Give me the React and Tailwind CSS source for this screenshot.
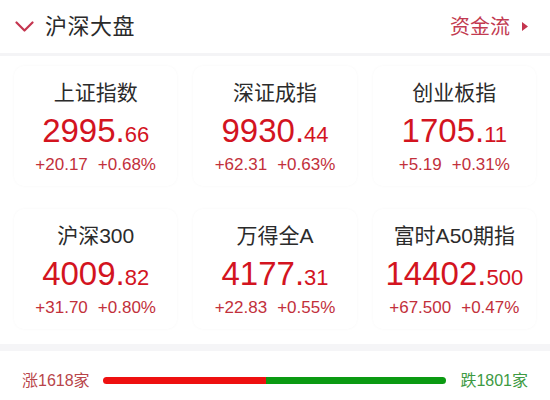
import React from 'react';

const indices = [
    { name: '上证指数', int: '2995', dec: '66', chg: '+20.17', pct: '+0.68%' },
    { name: '深证成指', int: '9930', dec: '44', chg: '+62.31', pct: '+0.63%' },
    { name: '创业板指', int: '1705', dec: '11', chg: '+5.19', pct: '+0.31%' },
    { name: '沪深300', int: '4009', dec: '82', chg: '+31.70', pct: '+0.80%' },
    { name: '万得全A', int: '4177', dec: '31', chg: '+22.83', pct: '+0.55%' },
    { name: '富时A50期指', int: '14402', dec: '500', chg: '+67.500', pct: '+0.47%' },
];

const font = { fontFamily: '"Liberation Sans", "Noto Sans CJK SC", sans-serif' };

export default function App() {
    const up = 1618;
    const down = 1801;
    const upPct = (up / (up + down)) * 100;

    return (
        <div className="w-[550px] h-[400px] bg-white overflow-hidden" style={font}>
            {/* Header */}
            <div className="h-[53px] flex items-center justify-between pl-[15px] pr-[22px]">
                <div className="flex items-center gap-[11px]">
                    <svg width="19" height="12" viewBox="0 0 19 12" className="mt-[1px]">
                        <path d="M1.5 1.5 L9.5 9.5 L17.5 1.5" fill="none" stroke="#c4354f" strokeWidth="2.2" strokeLinecap="round" strokeLinejoin="round" />
                    </svg>
                    <span className="text-[22px] text-[#2a2a2a] tracking-[0.5px]">沪深大盘</span>
                </div>
                <div className="flex items-center gap-[12px]">
                    <span className="text-[20px] text-[#c23a50]">资金流</span>
                    <svg width="6" height="9" viewBox="0 0 6 9">
                        <path d="M0 0 L6 4.5 L0 9 Z" fill="#c4354f" />
                    </svg>
                </div>
            </div>
            <div className="h-[3px] bg-[#f4f4f6]" />

            {/* Cards */}
            <div className="grid grid-cols-3 gap-x-[16px] gap-y-[23px] px-[14px] pt-[10px] pb-[15px]">
                {indices.map((it) => (
                    <div key={it.name} className="h-[120px] rounded-[10px] bg-white shadow-[0_0_3px_rgba(0,0,0,0.035)] flex flex-col items-center pt-[12px]">
                        <div className="text-[21px] leading-[30px] text-[#2b2b2b]">{it.name}</div>
                        <div className="mt-[6px] leading-[34px] text-[#d3141f]">
                            <span className="text-[33px]">{it.int}</span>
                            <span className="text-[33px]">.</span>
                            <span className="text-[22px]">{it.dec}</span>
                        </div>
                        <div className="mt-[1px] text-[17px] leading-[20px] text-[#c2303b] flex gap-[10px]">
                            <span>{it.chg}</span>
                            <span>{it.pct}</span>
                        </div>
                    </div>
                ))}
            </div>

            <div className="h-[7px] bg-[#f5f5f7]" />

            {/* Breadth bar */}
            <div className="h-[49px] pt-[10px] flex items-center pl-[22px] pr-[22px]">
                <span className="text-[16px] text-[#b8454a] w-[81px] whitespace-nowrap">涨1618家</span>
                <div className="flex-1 h-[7px] rounded-full overflow-hidden flex">
                    <div className="h-full bg-[#ee1010]" style={{ width: `${upPct}%` }} />
                    <div className="h-full flex-1 bg-[#0b9a12]" />
                </div>
                <span className="text-[16px] text-[#3d9a43] ml-[14px] whitespace-nowrap">跌1801家</span>
            </div>
        </div>
    );
}
